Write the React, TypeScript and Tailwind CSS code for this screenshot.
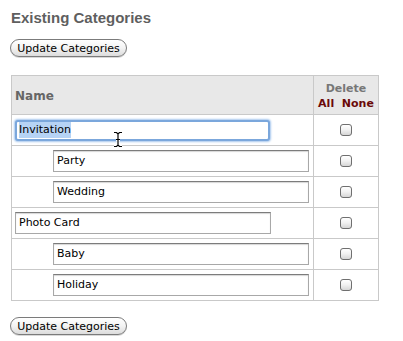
import React from "react"

type Row = { name: string; child?: boolean; focused?: boolean }

const ROWS: Row[] = [
  { name: "Invitation", focused: true },
  { name: "Party", child: true },
  { name: "Wedding", child: true },
  { name: "Photo Card" },
  { name: "Baby", child: true },
  { name: "Holiday", child: true },
]

const font = { fontFamily: '"DejaVu Sans", Verdana, sans-serif' }

function PillButton() {
  return (
    <button className="block h-[18px] w-[117px] rounded-full border border-[#7b7b7b] bg-gradient-to-b from-white via-[#f3f3f3] to-[#dcdcdc] text-[11px] leading-none text-black shadow-[0_1px_0_#d8d8d8]">
      Update Categories
    </button>
  )
}

function Checkbox() {
  return (
    <span className="block h-[12px] w-[12px] rounded-[3px] border border-[#6f6f6f] bg-gradient-to-b from-white via-[#f1f1f1] to-[#d6d6d6]" />
  )
}

function Cursor() {
  return (
    <svg className="absolute left-[113px] top-[131px]" width="10" height="17" viewBox="0 0 10 17">
      <path d="M1 1.5h2.5L5 3l1.5-1.5H9M5 3v11M1 15.5h2.5L5 14l1.5 1.5H9M3 8.5h4" fill="none" stroke="#fff" strokeWidth="3" />
      <path d="M1 1.5h2.5L5 3l1.5-1.5H9M5 3v11M1 15.5h2.5L5 14l1.5 1.5H9M3 8.5h4" fill="none" stroke="#000" strokeWidth="1.2" />
    </svg>
  )
}

export default function App() {
  return (
    <div className="relative h-[341px] w-[403px] bg-white px-[11px] pt-[9px]" style={font}>
      <h2 className="font-['Liberation_Sans',Arial,sans-serif] text-[15px] font-bold leading-[17px] text-[#5f5f5f]">
        Existing Categories
      </h2>
      <div className="mt-[13px] -ml-px">
        <PillButton />
      </div>
      <table className="mt-[18px] w-[368px] border-collapse border border-[#c9c9c9] text-[11px]">
        <thead>
          <tr className="h-[39px] bg-[#e8e8e8]">
            <th className="border border-[#c9c9c9] pl-[3px] pt-[2px] text-left text-[12px] font-bold text-[#666]">Name</th>
            <th className="w-[65px] border border-[#c9c9c9] pt-[1px] text-center text-[11px] font-bold leading-[15px]">
              <div className="text-[#777]">Delete</div>
              <div className="text-[#6b0a0a]">All&nbsp; None</div>
            </th>
          </tr>
        </thead>
        <tbody>
          {ROWS.map((r) => (
            <tr key={r.name} className="h-[31px]">
              <td className="border border-[#c9c9c9] p-0">
                <div className={r.child ? "pl-[41px]" : "pl-[3px]"}>
                  {r.focused ? (
                    <div className="flex h-[21px] w-[255px] items-center rounded-[3px] border-2 border-[#7ba7dc] bg-white pl-[2px] shadow-[0_0_2px_1px_#a8c8ee]">
                      <span className="bg-[#b6d3f5] text-[11px] text-black">Invitation</span>
                    </div>
                  ) : (
                    <div className="flex h-[22px] w-[256px] items-center border border-[#a8a8a8] border-t-[#7c7c7c] bg-white pl-[3px] text-[11px] text-black shadow-[inset_0_1px_1px_#d6d6d6]">
                      {r.name}
                    </div>
                  )}
                </div>
              </td>
              <td className="border border-[#c9c9c9]">
                <div className="flex items-center justify-center pr-[1px]">
                  <Checkbox />
                </div>
              </td>
            </tr>
          ))}
        </tbody>
      </table>
      <div className="mt-[16px] -ml-px">
        <PillButton />
      </div>
      <Cursor />
    </div>
  )
}
